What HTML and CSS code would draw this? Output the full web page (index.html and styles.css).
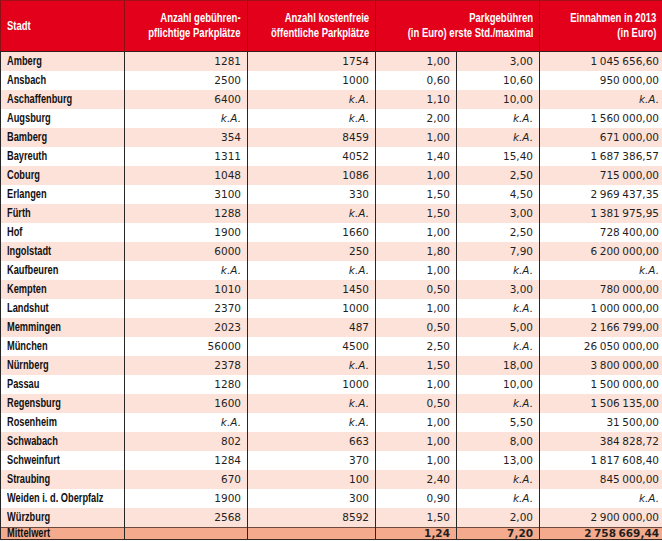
FILE: index.html
```html
<!DOCTYPE html>
<html lang="de">
<head>
<meta charset="utf-8">
<title>Parkgebühren Bayern</title>
<link rel="stylesheet" href="styles.css">
</head>
<body>
<table class="park">
  <colgroup>
    <col class="c-city"><col class="c-a"><col class="c-b"><col class="c-c"><col class="c-d"><col class="c-e">
  </colgroup>
  <thead>
    <tr>
      <th class="left"><div class="hd"><span>Stadt</span></div></th>
      <th><div class="hd"><span>Anzahl gebühren-</span><span>pflichtige Parkplätze</span></div></th>
      <th><div class="hd"><span>Anzahl kostenfreie</span><span>öffentliche Parkplätze</span></div></th>
      <th colspan="2"><div class="hd"><span>Parkgebühren</span><span>(in Euro) erste Std./maximal</span></div></th>
      <th><div class="hd"><span>Einnahmen in 2013</span><span>(in Euro)</span></div></th>
    </tr>
  </thead>
  <tbody>
    <tr><td class="city"><span>Amberg</span></td><td>1281</td><td>1754</td><td>1,00</td><td>3,00</td><td class="sum">1<i class="t"></i>045<i class="t"></i>656,60</td></tr>
    <tr><td class="city"><span>Ansbach</span></td><td>2500</td><td>1000</td><td>0,60</td><td>10,60</td><td class="sum">950<i class="t"></i>000,00</td></tr>
    <tr><td class="city"><span>Aschaffenburg</span></td><td>6400</td><td class="na">k.A.</td><td>1,10</td><td>10,00</td><td class="sum na">k.A.</td></tr>
    <tr><td class="city"><span>Augsburg</span></td><td class="na">k.A.</td><td class="na">k.A.</td><td>2,00</td><td class="na">k.A.</td><td class="sum">1<i class="t"></i>560<i class="t"></i>000,00</td></tr>
    <tr><td class="city"><span>Bamberg</span></td><td>354</td><td>8459</td><td>1,00</td><td class="na">k.A.</td><td class="sum">671<i class="t"></i>000,00</td></tr>
    <tr><td class="city"><span>Bayreuth</span></td><td>1311</td><td>4052</td><td>1,40</td><td>15,40</td><td class="sum">1<i class="t"></i>687<i class="t"></i>386,57</td></tr>
    <tr><td class="city"><span>Coburg</span></td><td>1048</td><td>1086</td><td>1,00</td><td>2,50</td><td class="sum">715<i class="t"></i>000,00</td></tr>
    <tr><td class="city"><span>Erlangen</span></td><td>3100</td><td>330</td><td>1,50</td><td>4,50</td><td class="sum">2<i class="t"></i>969<i class="t"></i>437,35</td></tr>
    <tr><td class="city"><span>Fürth</span></td><td>1288</td><td class="na">k.A.</td><td>1,50</td><td>3,00</td><td class="sum">1<i class="t"></i>381<i class="t"></i>975,95</td></tr>
    <tr><td class="city"><span>Hof</span></td><td>1900</td><td>1660</td><td>1,00</td><td>2,50</td><td class="sum">728<i class="t"></i>400,00</td></tr>
    <tr><td class="city"><span>Ingolstadt</span></td><td>6000</td><td>250</td><td>1,80</td><td>7,90</td><td class="sum">6<i class="t"></i>200<i class="t"></i>000,00</td></tr>
    <tr><td class="city"><span>Kaufbeuren</span></td><td class="na">k.A.</td><td class="na">k.A.</td><td>1,00</td><td class="na">k.A.</td><td class="sum na">k.A.</td></tr>
    <tr><td class="city"><span>Kempten</span></td><td>1010</td><td>1450</td><td>0,50</td><td>3,00</td><td class="sum">780<i class="t"></i>000,00</td></tr>
    <tr><td class="city"><span>Landshut</span></td><td>2370</td><td>1000</td><td>1,00</td><td class="na">k.A.</td><td class="sum">1<i class="t"></i>000<i class="t"></i>000,00</td></tr>
    <tr><td class="city"><span>Memmingen</span></td><td>2023</td><td>487</td><td>0,50</td><td>5,00</td><td class="sum">2<i class="t"></i>166<i class="t"></i>799,00</td></tr>
    <tr><td class="city"><span>München</span></td><td>56000</td><td>4500</td><td>2,50</td><td class="na">k.A.</td><td class="sum">26<i class="t"></i>050<i class="t"></i>000,00</td></tr>
    <tr><td class="city"><span>Nürnberg</span></td><td>2378</td><td class="na">k.A.</td><td>1,50</td><td>18,00</td><td class="sum">3<i class="t"></i>800<i class="t"></i>000,00</td></tr>
    <tr><td class="city"><span>Passau</span></td><td>1280</td><td>1000</td><td>1,00</td><td>10,00</td><td class="sum">1<i class="t"></i>500<i class="t"></i>000,00</td></tr>
    <tr><td class="city"><span>Regensburg</span></td><td>1600</td><td class="na">k.A.</td><td>0,50</td><td class="na">k.A.</td><td class="sum">1<i class="t"></i>506<i class="t"></i>135,00</td></tr>
    <tr><td class="city"><span>Rosenheim</span></td><td class="na">k.A.</td><td class="na">k.A.</td><td>1,00</td><td>5,50</td><td class="sum">31<i class="t"></i>500,00</td></tr>
    <tr><td class="city"><span>Schwabach</span></td><td>802</td><td>663</td><td>1,00</td><td>8,00</td><td class="sum">384<i class="t"></i>828,72</td></tr>
    <tr><td class="city"><span>Schweinfurt</span></td><td>1284</td><td>370</td><td>1,00</td><td>13,00</td><td class="sum">1<i class="t"></i>817<i class="t"></i>608,40</td></tr>
    <tr><td class="city"><span>Straubing</span></td><td>670</td><td>100</td><td>2,40</td><td class="na">k.A.</td><td class="sum">845<i class="t"></i>000,00</td></tr>
    <tr><td class="city"><span>Weiden i. d. Oberpfalz</span></td><td>1900</td><td>300</td><td>0,90</td><td class="na">k.A.</td><td class="sum na">k.A.</td></tr>
    <tr><td class="city"><span>Würzburg</span></td><td>2568</td><td>8592</td><td>1,50</td><td>2,00</td><td class="sum">2<i class="t"></i>900<i class="t"></i>000,00</td></tr>
  </tbody>
  <tfoot>
    <tr><td class="city"><span>Mittelwert</span></td><td></td><td></td><td>1,24</td><td>7,20</td><td class="sum">2<i class="t"></i>758<i class="t"></i>669,44</td></tr>
  </tfoot>
</table>
</body>
</html>
```

FILE: styles.css
```css
html, body {
  margin: 0;
  padding: 0;
  background: #ffffff;
  overflow: hidden;
}

.park {
  border-collapse: collapse;
  table-layout: fixed;
  width: 662px;
  font-family: "DejaVu Sans", Verdana, sans-serif;
  font-size: 10.5px;
  color: #1f1f1f;
}

.c-city { width: 124px; }
.c-a { width: 123px; }
.c-b { width: 128px; }
.c-c { width: 81px; }
.c-d { width: 83px; }
.c-e { width: 123px; }

.park th {
  height: 50px;
  padding: 0 6px;
  background: #e2001a;
  color: #ffffff;
  font-weight: normal;
  vertical-align: middle;
  border-left: 1px solid #8e0f14;
  border-top: 1px solid #a0101a;
  border-bottom: 1px solid #3a1a1a;
}

.hd {
  display: flex;
  flex-direction: column;
  align-items: flex-end;
}

.left .hd { align-items: flex-start; }

.hd span {
  display: block;
  white-space: nowrap;
  font-family: "Liberation Sans", Arial, sans-serif;
  font-weight: bold;
  font-size: 12.5px;
  line-height: 15px;
  transform: scaleX(0.76);
  transform-origin: right center;
}

.left .hd span { transform-origin: left center; }

.park td {
  height: 19px;
  padding: 0 6px;
  text-align: right;
  white-space: nowrap;
  line-height: 19px;
  border-left: 1px solid #262626;
  border-right: 1px solid #262626;
}

.park td.sum { padding-right: 3px; }

.t {
  display: inline-block;
  width: 2.5px;
}

.park tbody tr:nth-child(odd) td { background: #fce2d9; }
.park tbody tr:nth-child(even) td { background: #ffffff; }

.park td.city { text-align: left; }

.city span {
  display: inline-block;
  font-family: "Liberation Sans", Arial, sans-serif;
  font-weight: bold;
  font-size: 12.5px;
  color: #111111;
  transform: scaleX(0.74);
  transform-origin: left center;
}

.park td.na { font-style: italic; }

.park tfoot td {
  background: #f4aa8d;
  font-weight: bold;
  height: 11px;
  line-height: 11px;
  vertical-align: top;
  border-top: 1px solid #6e4a3e;
  border-bottom: 1px solid #3a2a22;
}
```
